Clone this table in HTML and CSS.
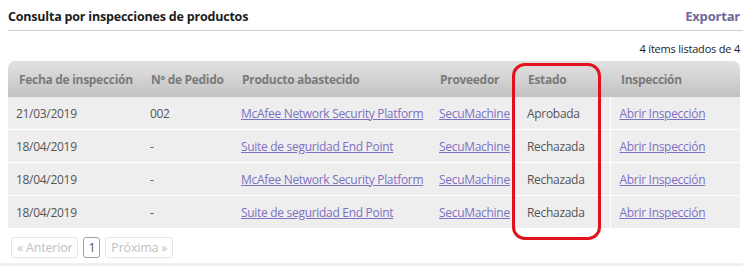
FILE: index.html
```html
<!DOCTYPE html>
<html lang="es">
<head>
<meta charset="utf-8">
<link rel="stylesheet" href="styles.css">
</head>
<body>
<div class="page">
  <div class="titlebar">
    <h1 class="title">Consulta por inspecciones de productos</h1>
    <a class="export" href="#">Exportar</a>
  </div>
  <div class="count">4 ítems listados de 4</div>
  <div class="table-wrap">
    <table class="grid">
      <colgroup>
        <col class="c1"><col class="c2"><col class="c3"><col class="c4"><col class="c5"><col class="c6">
      </colgroup>
      <thead>
        <tr>
          <th>Fecha de inspección</th>
          <th>Nº de Pedido</th>
          <th>Producto abastecido</th>
          <th>Proveedor</th>
          <th>Estado</th>
          <th>Inspección</th>
        </tr>
      </thead>
      <tbody>
        <tr>
          <td>21/03/2019</td><td>002</td>
          <td><a href="#">McAfee Network Security Platform</a></td>
          <td><a href="#">SecuMachine</a></td>
          <td>Aprobada</td>
          <td class="last"><a href="#">Abrir Inspección</a></td>
        </tr>
        <tr>
          <td>18/04/2019</td><td>-</td>
          <td><a href="#">Suite de seguridad End Point</a></td>
          <td><a href="#">SecuMachine</a></td>
          <td>Rechazada</td>
          <td class="last"><a href="#">Abrir Inspección</a></td>
        </tr>
        <tr>
          <td>18/04/2019</td><td>-</td>
          <td><a href="#">McAfee Network Security Platform</a></td>
          <td><a href="#">SecuMachine</a></td>
          <td>Rechazada</td>
          <td class="last"><a href="#">Abrir Inspección</a></td>
        </tr>
        <tr>
          <td>18/04/2019</td><td>-</td>
          <td><a href="#">Suite de seguridad End Point</a></td>
          <td><a href="#">SecuMachine</a></td>
          <td>Rechazada</td>
          <td class="last"><a href="#">Abrir Inspección</a></td>
        </tr>
      </tbody>
    </table>
    <div class="highlight"></div>
  </div>
  <div class="pager">
    <span class="pbtn">« Anterior</span>
    <span class="pbtn current">1</span>
    <span class="pbtn">Próxima »</span>
  </div>
  <div class="footer-strip"></div>
</div>
</body>
</html>
```
FILE: styles.css
```css
html, body {
  margin: 0;
  padding: 0;
  background: #fff;
}
body {
  font-family: "Open Sans", "Noto Sans", sans-serif;
  font-size: 12px;
  color: #555;
  overflow: hidden;
}
.page {
  padding: 0 3px 0 8px;
}
.titlebar {
  display: flex;
  justify-content: space-between;
  align-items: flex-end;
  height: 30px;
  border-bottom: 1px solid #cfcfcf;
  margin-right: -3px;
  padding-right: 3px;
}
.title {
  margin: 0 0 5px 0;
  font-size: 12.5px;
  font-weight: 700;
  color: #1c1c1c;
  letter-spacing: -0.2px;
}
.export {
  margin-bottom: 5px;
  font-size: 13px;
  font-weight: 700;
  color: #6a6a98;
  text-decoration: none;
  letter-spacing: -0.2px;
}
.count {
  text-align: right;
  font-size: 11px;
  color: #1c1c1c;
  margin-top: 10px;
  height: 20px;
  letter-spacing: -0.2px;
}
.table-wrap {
  position: relative;
}
.grid {
  width: 732px;
  border-collapse: collapse;
  table-layout: fixed;
}
.grid .c1 { width: 132px; }
.grid .c2 { width: 91px; }
.grid .c3 { width: 198px; }
.grid .c4 { width: 88px; }
.grid .c5 { width: 93px; }
.grid .c6 { width: 130px; }
.grid th {
  height: 36px;
  padding: 0 0 0 11px;
  text-align: left;
  font-weight: 700;
  font-size: 12px;
  color: #7a7a7a;
  letter-spacing: -0.3px;
  background: linear-gradient(#e2e2e2, #c2c2c2);
  white-space: nowrap;
}
.grid th:first-child { border-top-left-radius: 7px; }
.grid th:last-child { border-top-right-radius: 7px; }
.grid td {
  height: 32px;
  padding: 0 0 0 10px;
  background: #eeeeee;
  border-bottom: 1px solid #fff;
  white-space: nowrap;
  letter-spacing: -0.3px;
  color: #555;
}
.grid td:first-child { padding-left: 8px; }
.grid td.last { border-left: 1px solid #fff; padding-left: 9px; }
.grid a {
  color: #7c72c2;
  text-decoration: underline;
}
.highlight {
  position: absolute;
  left: 504px;
  top: 2px;
  width: 83px;
  height: 171px;
  border: 3px solid #e3111e;
  border-radius: 13px;
  pointer-events: none;
}
.pager {
  display: flex;
  gap: 5px;
  padding: 8px 0 0 3px;
  height: 28px;
  box-sizing: border-box;
  align-items: flex-start;
}
.pbtn {
  display: inline-flex;
  align-items: center;
  height: 21px;
  padding: 0 5px;
  border: 1px solid #e6e6e6;
  border-radius: 3px;
  color: #c0c0c0;
  font-size: 12.5px;
  box-sizing: border-box;
  letter-spacing: -0.2px;
}
.pbtn.current {
  border-color: #a0a0a0;
  color: #555;
  padding: 0 4px;
}
.footer-strip {
  height: 6px;
  background: #f0f0f0;
  margin-left: -8px;
  margin-right: -3px;
  margin-top: 6px;
}
```
